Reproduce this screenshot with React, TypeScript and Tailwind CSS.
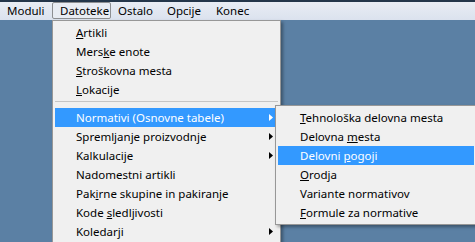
import React from 'react';

type Item = { label: string; u?: number; sub?: boolean; active?: boolean };

const topMenu = [
  { label: 'Moduli', w: 'w-[52px]' },
  { label: 'Datoteke', w: 'w-[59px]', open: true },
  { label: 'Ostalo', w: 'w-[49px]' },
  { label: 'Opcije', w: 'w-[49px]' },
  { label: 'Konec', w: 'w-[50px]' },
];

const mainA: Item[] = [
  { label: 'Artikli', u: 0 },
  { label: 'Merske enote', u: 4 },
  { label: 'Stroškovna mesta', u: 0 },
  { label: 'Lokacije', u: 0 },
];

const mainB: Item[] = [
  { label: 'Normativi (Osnovne tabele)', sub: true, active: true },
  { label: 'Spremljanje proizvodnje', sub: true },
  { label: 'Kalkulacije', sub: true },
  { label: 'Nadomestni artikli' },
  { label: 'Pakirne skupine in pakiranje', u: 3 },
  { label: 'Kode sledljivosti', u: 5 },
  { label: 'Koledarji', sub: true },
];

const subItems: Item[] = [
  { label: 'Tehnološka delovna mesta', u: 0 },
  { label: 'Delovna mesta', u: 8 },
  { label: 'Delovni pogoji', u: 8, active: true },
  { label: 'Orodja', u: 0 },
  { label: 'Variante normativov' },
  { label: 'Formule za normative', u: 0 },
];

// mnemonic underline
function Label({ text, u }: { text: string; u?: number }) {
  if (u === undefined) return <span>{text}</span>;
  return (
    <span>
      {text.slice(0, u)}
      <span className="underline underline-offset-[1px]">{text[u]}</span>
      {text.slice(u + 1)}
    </span>
  );
}

function Arrow({ white }: { white?: boolean }) {
  return (
    <svg width="4" height="7" viewBox="0 0 4 7" className="absolute right-[5px] top-[6px]">
      <path d="M0 0 L4 3.5 L0 7 Z" fill={white ? '#ffffff' : '#000000'} />
    </svg>
  );
}

function Row({ item, indent }: { item: Item; indent: string }) {
  return (
    <div
      className={`relative flex h-[19px] items-center ${indent} ${
        item.active ? 'bg-[#3399ff] text-white' : 'text-black'
      }`}
    >
      <Label text={item.label} u={item.active && item.sub ? undefined : item.u} />
      {item.sub && <Arrow white={item.active} />}
    </div>
  );
}

export default function App() {
  return (
    <div
      className="relative h-[242px] w-[475px] overflow-hidden bg-[#5b80a4] text-[11.5px] leading-none"
      style={{ fontFamily: '"Noto Sans", "Open Sans", sans-serif' }}
    >
      {/* menu bar */}
      <div className="h-[2px] bg-[#24364a]" />
      <div className="flex h-[18px] items-stretch bg-gradient-to-b from-[#e9edf4] to-[#dbe2ee]">
        {topMenu.map((m) => (
          <div
            key={m.label}
            className={`flex ${m.w} shrink-0 items-center pl-[7px] ${
              m.open ? 'h-[17px] rounded-[2px] border border-[#8d8f92] bg-[#e8ecf3] pl-[6px]' : ''
            }`}
          >
            {m.label}
          </div>
        ))}
      </div>

      {/* Datoteke dropdown */}
      <div className="absolute left-[52px] top-[20px] h-[240px] w-[229px] border border-[#979797] bg-[#f0f0f0] p-[2px] shadow-[2px_2px_3px_rgba(0,0,0,0.35)]">
        {mainA.map((it) => (
          <Row key={it.label} item={it} indent="pl-[21px]" />
        ))}
        <div className="flex h-[9px] items-start pt-[2px]">
          <div className="h-px w-full bg-[#c5c5c5]" />
        </div>
        {mainB.map((it) => (
          <Row key={it.label} item={it} indent="pl-[21px]" />
        ))}
      </div>

      {/* Normativi submenu */}
      <div className="absolute left-[275px] top-[105px] w-[202px] border border-[#979797] bg-[#f0f0f0] p-[2px] shadow-[2px_2px_3px_rgba(0,0,0,0.35)]">
        {subItems.map((it) => (
          <Row key={it.label} item={it} indent="pl-[22px]" />
        ))}
      </div>
    </div>
  );
}
